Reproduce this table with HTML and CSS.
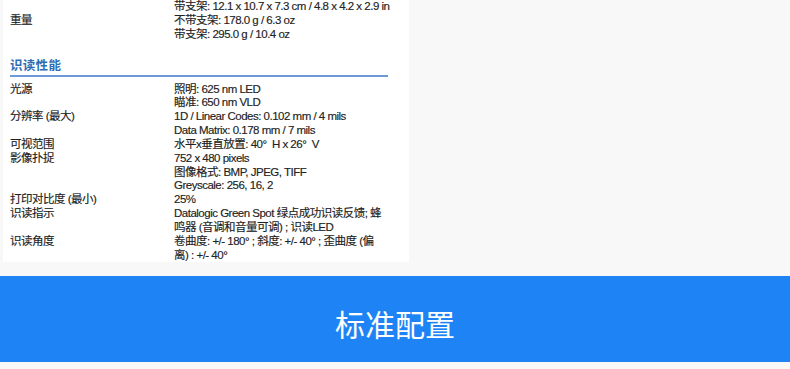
FILE: index.html
```html
<!DOCTYPE html>
<html lang="zh-CN">
<head>
<meta charset="utf-8">
<title>规格</title>
<link rel="stylesheet" href="styles.css">
</head>
<body>
<div class="panel">
  <div class="spec">
    <div class="k"></div>
    <div class="v">带支架: 12.1 x 10.7 x 7.3 cm / 4.8 x 4.2 x 2.9 in</div>
  </div>
  <div class="spec">
    <div class="k">重量</div>
    <div class="v">不带支架: 178.0 g / 6.3 oz<br>带支架: 295.0 g / 10.4 oz</div>
  </div>
  <h2 class="section">识读性能</h2>
  <div class="spec">
    <div class="k">光源</div>
    <div class="v">照明: 625 nm LED<br>瞄准: 650 nm VLD</div>
  </div>
  <div class="spec">
    <div class="k">分辨率 (最大)</div>
    <div class="v">1D / Linear Codes: 0.102 mm / 4 mils<br>Data Matrix: 0.178 mm / 7 mils</div>
  </div>
  <div class="spec">
    <div class="k">可视范围</div>
    <div class="v">水平x垂直放置: 40°&nbsp; H x 26°&nbsp; V</div>
  </div>
  <div class="spec">
    <div class="k">影像扑捉</div>
    <div class="v">752 x 480 pixels<br>图像格式: BMP, JPEG, TIFF<br>Greyscale: 256, 16, 2</div>
  </div>
  <div class="spec">
    <div class="k">打印对比度 (最小)</div>
    <div class="v">25%</div>
  </div>
  <div class="spec">
    <div class="k">识读指示</div>
    <div class="v">Datalogic Green Spot 绿点成功识读反馈; 蜂<br>鸣器 (音调和音量可调) ; 识读LED</div>
  </div>
  <div class="spec">
    <div class="k">识读角度</div>
    <div class="v">卷曲度: +/- 180° ; 斜度: +/- 40° ; 歪曲度 (偏<br>离) : +/- 40°</div>
  </div>
</div>
<div class="banner">标准配置</div>
</body>
</html>
```
FILE: styles.css
```css
html, body {
  margin: 0;
  padding: 0;
}
body {
  background: #f8f8f8;
  font-family: "Liberation Sans", "Noto Sans CJK SC", sans-serif;
  color: #222222;
  width: 790px;
  height: 369px;
  overflow: hidden;
}
.panel {
  margin-left: 3px;
  width: 406px;
  height: 262px;
  background: #ffffff;
  padding: 0 0 0 7px;
  box-sizing: border-box;
  font-size: 11.5px;
  line-height: 13.85px;
  letter-spacing: -0.5px;
  -webkit-text-stroke: 0.15px #222222;
}
.spec {
  display: flex;
}
.k {
  width: 164px;
  flex: none;
}
.v {
  width: 220px;
  white-space: nowrap;
}
.section {
  margin: 17px 0 6px 0;
  width: 378px;
  font-size: 12.5px;
  line-height: 15px;
  font-weight: bold;
  color: #2e6db4;
  border-bottom: 2px solid #6b9ad6;
  padding-bottom: 1px;
  letter-spacing: 0.3px;
  -webkit-text-stroke: 0;
}
.banner {
  margin-top: 14px;
  height: 86px;
  padding-top: 8px;
  box-sizing: border-box;
  background: #1e84f6;
  color: #ffffff;
  font-family: "Noto Sans CJK SC", sans-serif;
  font-size: 30px;
  display: flex;
  align-items: center;
  justify-content: center;
}
```
